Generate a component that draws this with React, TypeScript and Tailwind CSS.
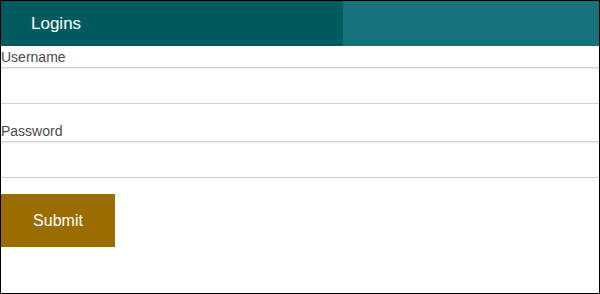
export default function App() {
  return (
    <div className="w-[600px] h-[294px] border border-black bg-white font-['Liberation_Sans',Arial,sans-serif]">
      {/* header tabs */}
      <div className="flex h-[45px] bg-[#17737b]">
        <div className="flex w-[342px] items-center bg-[#005b61] pl-[30px] text-[17px] text-white">
          Logins
        </div>
      </div>

      <form className="flex flex-col" onSubmit={(e) => e.preventDefault()}>
        <label htmlFor="username" className="block h-[21px] pt-px text-[14px] leading-[21px] text-[#4a4a4a]">
          Username
        </label>
        <input
          id="username"
          type="text"
          className="h-[37px] w-full border-y border-[#cfcfcf] bg-white shadow-[inset_0_1px_2px_rgba(0,0,0,0.08)] outline-none"
        />

        <label htmlFor="password" className="mt-4 block h-[21px] pt-px text-[14px] leading-[21px] text-[#4a4a4a]">
          Password
        </label>
        <input
          id="password"
          type="password"
          className="h-[37px] w-full border-y border-[#cfcfcf] bg-white shadow-[inset_0_1px_2px_rgba(0,0,0,0.08)] outline-none"
        />

        <button
          type="submit"
          className="mt-4 h-[53px] w-[114px] bg-[#9b6d00] text-[16px] text-white"
        >
          Submit
        </button>
      </form>
    </div>
  );
}
